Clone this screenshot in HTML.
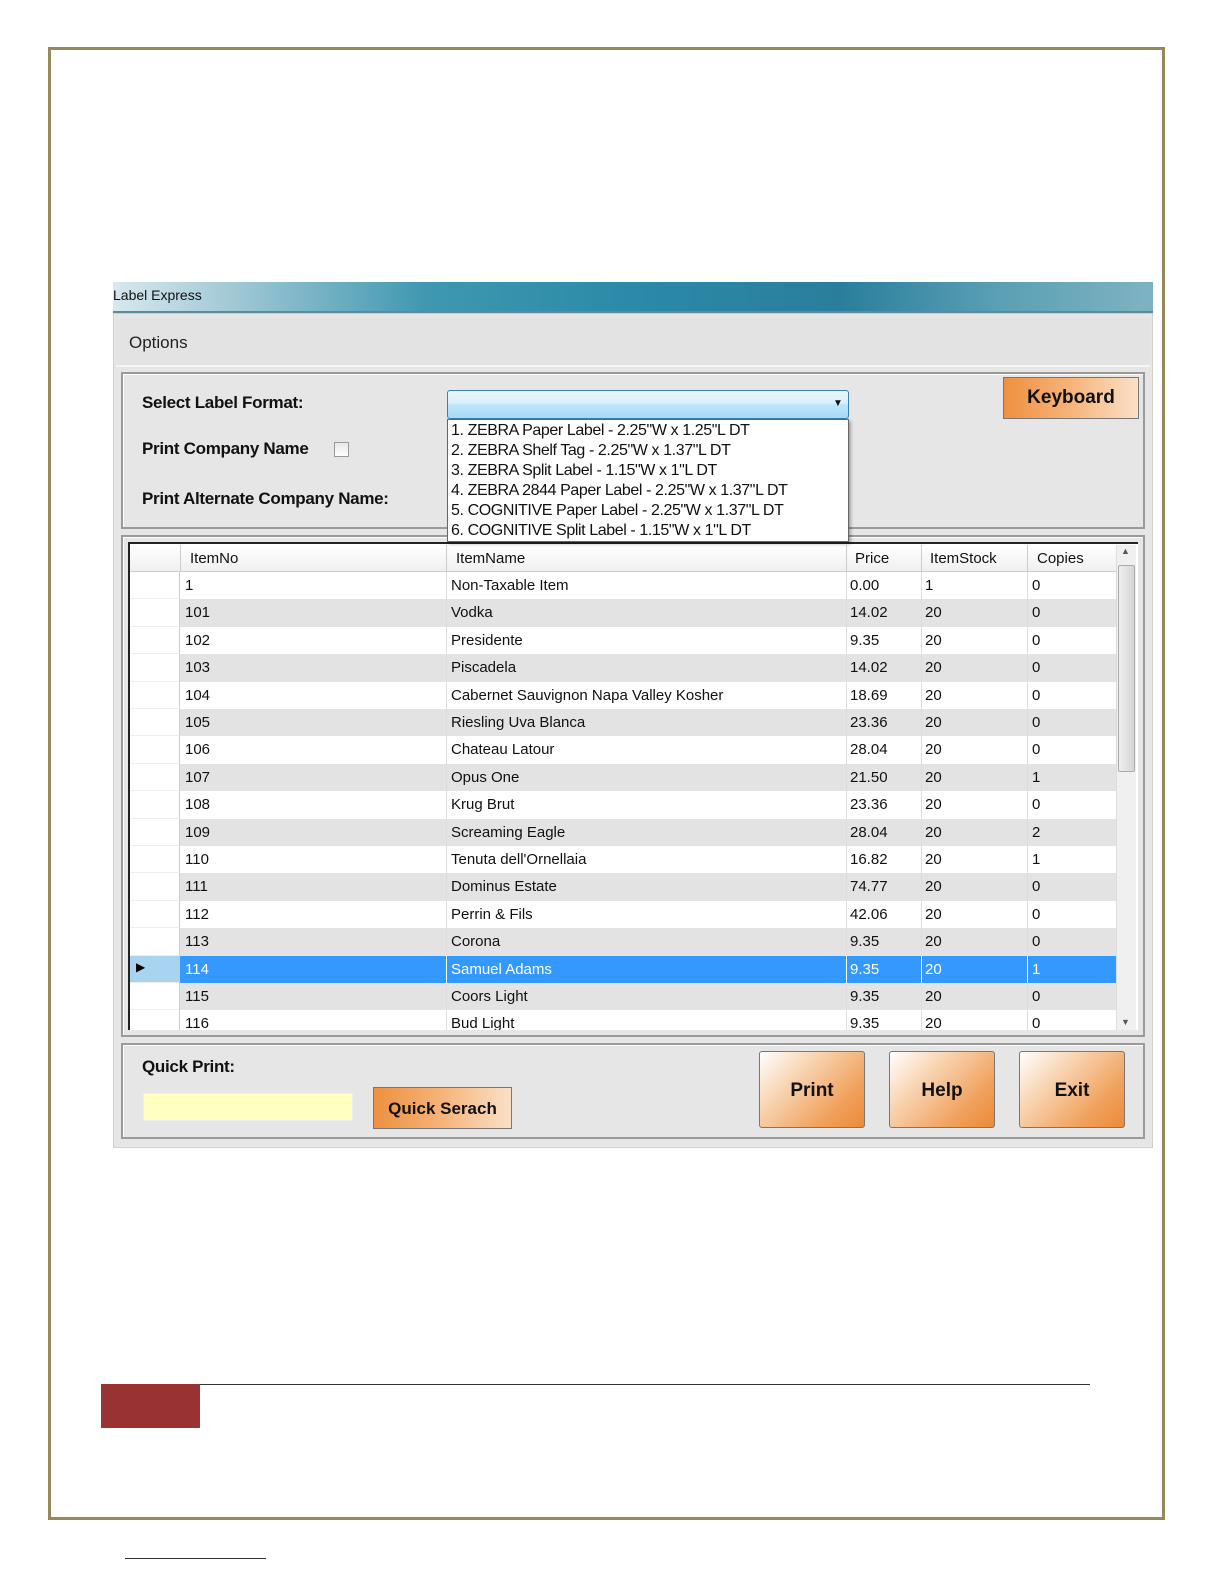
<!DOCTYPE html>
<html><head><style>
*{margin:0;padding:0;box-sizing:border-box}
html{width:1224px;height:1584px;overflow:hidden}
body{width:1224px;height:1584px;background:#fff;position:relative;font-family:"Liberation Sans",sans-serif;overflow:hidden}
.a{position:absolute}
.frame{left:48px;top:47px;width:1117px;height:1473px;border:3px solid #948a5e}
.title{left:113px;top:282px;width:1040px;height:31px;background:linear-gradient(90deg,#d8e8ee 0%,#9fc7d4 12%,#3f98b0 30%,#2a8aa8 50%,#2a7e9c 70%,#5a9fb4 85%,#7fb3c2 100%);font-size:14px;color:#111;padding:5px 0 0 0;border-bottom:2px solid #5d8a98;overflow:hidden}
.win{left:113px;top:313px;width:1040px;height:835px;background:#e6e6e6;border:1px solid #cfcfcf}
.grp{border:2px solid #9a9a9a;box-shadow:inset 1px 1px 0 #fff}
.lbl{font-weight:bold;font-size:17px;color:#111;letter-spacing:-0.3px;white-space:nowrap}
.btn{background:linear-gradient(135deg,#fff 0%,#f8d2ae 35%,#f0a05a 75%,#ec8a38 100%);border:1px solid #777;font-weight:bold;color:#111;text-align:center}
.dd{font-size:16px;color:#111;letter-spacing:-0.4px;line-height:20px;white-space:nowrap}
.row{left:130px;width:986px;height:27.4px;font-size:15px;color:#111}
.row span{position:absolute;top:5px;white-space:nowrap}
.row i{position:absolute;top:0;bottom:0;width:1px;background:#ddd}
</style></head><body>
<div class="a frame"></div>
<div class="a title">Label Express</div>
<div class="a win"></div>
<div class="a" style="left:116px;top:318px;width:1034px;height:49px;background:#e3e3e3;border-bottom:2px solid #f6f6f6"></div>
<div class="a" style="left:129px;top:333px;font-size:17px;color:#222">Options</div>
<div class="a grp" style="left:121px;top:372px;width:1024px;height:157px"></div>
<div class="a lbl" style="left:142px;top:393px">Select Label Format:</div>
<div class="a lbl" style="left:142px;top:439px">Print Company Name</div>
<div class="a" style="left:334px;top:442px;width:15px;height:15px;border:1px solid #999;background:linear-gradient(#e8e8e8,#fff)"></div>
<div class="a lbl" style="left:142px;top:489px">Print Alternate Company Name:</div>
<div class="a btn" style="left:1003px;top:377px;width:136px;height:42px;font-size:19px;line-height:40px;background:linear-gradient(90deg,#ee9040 0%,#f6b47a 50%,#fbe0c8 100%)">Keyboard</div>
<div class="a grp" style="left:121px;top:535px;width:1024px;height:502px"></div>
<div class="a" style="left:128px;top:542px;width:1010px;height:488px;border-top:2px solid #222;border-left:2px solid #222;background:#fff"></div>
<div class="a" style="left:130px;top:545px;width:986px;height:27px;background:linear-gradient(#fff,#f0f0f0);border-bottom:1px solid #ccc;font-size:15px;color:#111">
<span class="a" style="left:60px;top:5px">ItemNo</span><span class="a" style="left:326px;top:5px">ItemName</span><span class="a" style="left:725px;top:5px">Price</span><span class="a" style="left:800px;top:5px">ItemStock</span><span class="a" style="left:907px;top:5px">Copies</span>
<i class="a" style="left:50px;top:0;bottom:0;width:1px;background:#ccc"></i><i class="a" style="left:316px;top:0;bottom:0;width:1px;background:#ccc"></i><i class="a" style="left:716px;top:0;bottom:0;width:1px;background:#ccc"></i><i class="a" style="left:791px;top:0;bottom:0;width:1px;background:#ccc"></i><i class="a" style="left:897px;top:0;bottom:0;width:1px;background:#ccc"></i>
</div>
<div class="a" style="left:1116px;top:545px;width:20px;height:485px;background:#f0f0f0;border-left:1px solid #ddd"></div>
<div class="a" style="left:1118px;top:565px;width:17px;height:207px;background:linear-gradient(90deg,#eee,#d6d6d6);border:1px solid #aaa;border-radius:2px"></div>
<div class="a" style="left:1121px;top:546px;font-size:9px;color:#555">▲</div>
<div class="a" style="left:1121px;top:1017px;font-size:9px;color:#555">▼</div>
<div class="a" style="left:130px;top:572px;width:986px;height:458px;overflow:hidden">
<div id="rows"></div>
</div>
<script>
var d=[["1","Non-Taxable Item","0.00","1","0"],["101","Vodka","14.02","20","0"],["102","Presidente","9.35","20","0"],["103","Piscadela","14.02","20","0"],["104","Cabernet Sauvignon Napa Valley Kosher","18.69","20","0"],["105","Riesling Uva Blanca","23.36","20","0"],["106","Chateau Latour","28.04","20","0"],["107","Opus One","21.50","20","1"],["108","Krug Brut","23.36","20","0"],["109","Screaming Eagle","28.04","20","2"],["110","Tenuta dell'Ornellaia","16.82","20","1"],["111","Dominus Estate","74.77","20","0"],["112","Perrin &amp; Fils","42.06","20","0"],["113","Corona","9.35","20","0"],["114","Samuel Adams","9.35","20","1"],["115","Coors Light","9.35","20","0"],["116","Bud Light","9.35","20","0"]];
var h="";d.forEach(function(r,i){var sel=i==14;var bg=sel?"#3399ff":(i%2?"#e3e3e3":"#fff");var c=sel?"#fff":"#111";
h+='<div class="a row" style="left:0;top:'+(i*27.4)+'px;background:'+bg+';color:'+c+'">'+
'<div class="a" style="left:0;top:0;width:50px;height:100%;background:'+(sel?'#a8d4f2':'#fff')+';border-right:1px solid #ccc;border-bottom:1px solid #eee">'+(sel?'<span style="left:6px;top:4px;color:#000;font-size:12px">▶</span>':'')+'</div>'+
'<span style="left:55px">'+r[0]+'</span><span style="left:321px">'+r[1]+'</span><span style="left:720px">'+r[2]+'</span><span style="left:795px">'+r[3]+'</span><span style="left:902px">'+r[4]+'</span>'+
'<i style="left:316px;background:'+(sel?'#fff':'#ddd')+'"></i><i style="left:716px;background:'+(sel?'#fff':'#ddd')+'"></i><i style="left:791px;background:'+(sel?'#fff':'#ddd')+'"></i><i style="left:897px;background:'+(sel?'#fff':'#ddd')+'"></i></div>';});
document.getElementById("rows").innerHTML=h;
</script>
<div class="a" style="left:447px;top:390px;width:402px;height:29px;border:1px solid #3c7fb1;border-radius:3px;background:linear-gradient(#eaf6fd 0%,#d9f0fc 45%,#bee6fd 50%,#a7d9f5 100%)"></div>
<div class="a" style="left:833px;top:398px;font-size:10px;color:#111">▼</div>
<div class="a" style="left:447px;top:419px;width:402px;height:123px;background:#fff;border:1px solid #666;box-shadow:2px 2px 3px rgba(0,0,0,.3);padding:1px 0 0 3px;overflow:hidden">
<div class="dd">1. ZEBRA Paper Label - 2.25"W x 1.25"L DT</div>
<div class="dd">2. ZEBRA Shelf Tag - 2.25"W x 1.37"L DT</div>
<div class="dd">3. ZEBRA Split Label - 1.15"W x 1"L DT</div>
<div class="dd">4. ZEBRA 2844 Paper Label - 2.25"W x 1.37"L DT</div>
<div class="dd">5. COGNITIVE Paper Label - 2.25"W x 1.37"L DT</div>
<div class="dd">6. COGNITIVE Split Label - 1.15"W x 1"L DT</div>
</div>
<div class="a grp" style="left:121px;top:1043px;width:1024px;height:96px"></div>
<div class="a lbl" style="left:142px;top:1057px">Quick Print:</div>
<div class="a" style="left:143px;top:1093px;width:210px;height:28px;background:#ffffc0;border:1px solid #eee"></div>
<div class="a btn" style="left:373px;top:1087px;width:139px;height:42px;font-size:17px;line-height:42px;background:linear-gradient(90deg,#ee9040 0%,#f6b47a 50%,#fbe0c8 100%)">Quick Serach</div>
<div class="a btn" style="left:759px;top:1051px;width:106px;height:77px;font-size:19px;line-height:78px;border-radius:3px">Print</div>
<div class="a btn" style="left:889px;top:1051px;width:106px;height:77px;font-size:19px;line-height:78px;border-radius:3px">Help</div>
<div class="a btn" style="left:1019px;top:1051px;width:106px;height:77px;font-size:19px;line-height:78px;border-radius:3px">Exit</div>
<div class="a" style="left:200px;top:1384px;width:890px;height:1px;background:#333"></div>
<div class="a" style="left:101px;top:1384px;width:99px;height:44px;background:#993333"></div>
<div class="a" style="left:125px;top:1558px;width:141px;height:1px;background:#333"></div>
</body></html>
